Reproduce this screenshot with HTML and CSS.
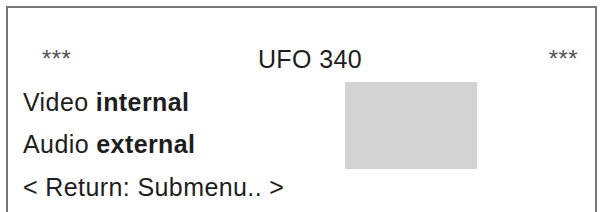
FILE: index.html
```html
<!DOCTYPE html>
<html lang="en">
<head>
  <meta charset="UTF-8">
  <title>UFO 340 menu</title>
  <link rel="stylesheet" href="styles.css">
</head>
<body>
<div class="screen">
  <div class="title-row">
    <span class="stars">***</span>
    <span class="title">UFO 340</span>
    <span class="stars right">***</span>
  </div>

  <div class="menu">
    <div class="line">Video <b>internal</b></div>
    <div class="preview"></div>
    <div class="line">Audio <b>external</b></div>
    <div class="line wide">&lt; Return: Submenu.. &gt;</div>
  </div>
</div>
</body>
</html>
```

FILE: styles.css
```css
html, body {
  margin: 0;
  background: white;
  overflow: hidden;
}
body {
  font-family: 'Liberation Sans', Arial, Helvetica, sans-serif;
  font-size: 25px;
  letter-spacing: 0.4px;
  color: #1e1e1e;
}
.screen {
  box-sizing: border-box;
  width: 591px;
  height: 206px;
  margin: 6px 0 0 6px;
  padding-top: 30px;
  border: 2px solid #777;
  border-bottom: none;
}
.title-row {
  display: grid;
  grid-template-columns: 1fr auto 1fr;
  padding: 0 17px 0 34px;
  line-height: 42.5px;
}
.stars {
  color: #555;
  font-size: 24px;
  vertical-align: 3px;
}
.stars.right {
  text-align: right;
}
.menu {
  display: grid;
  grid-template-columns: 322px 132px;
  grid-template-rows: 42.5px 42.5px 42px;
  padding-left: 15px;
  line-height: 42.5px;
}
.line {
  white-space: nowrap;
}
.line.wide {
  grid-column: 1 / 3;
}
.preview {
  grid-row: 1 / 3;
  grid-column: 2;
  height: 87px;
  margin-top: 1px;
  background: #d3d3d3;
}
```
